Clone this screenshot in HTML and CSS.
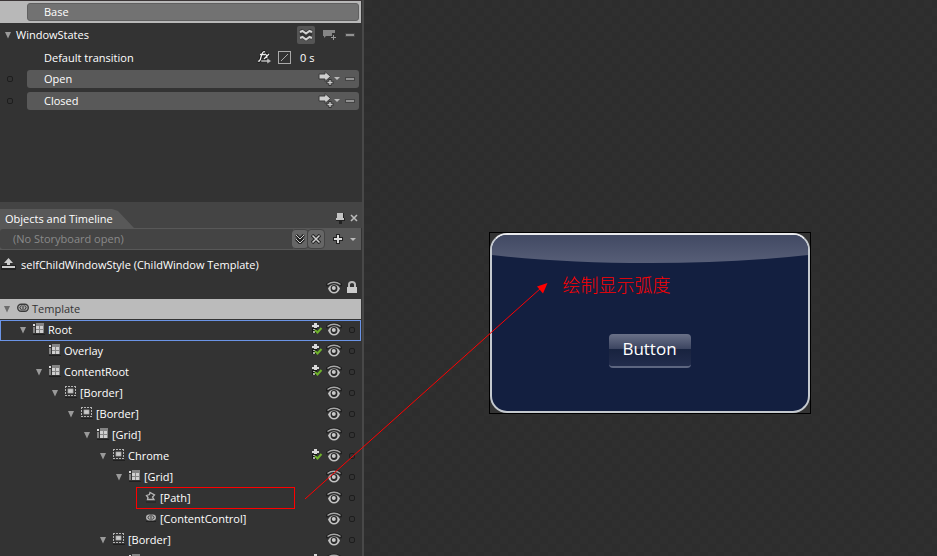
FILE: index.html
```html
<!DOCTYPE html>
<html lang="en">
<head>
<meta charset="utf-8">
<title>Objects and Timeline</title>
<link rel="stylesheet" href="styles.css">
</head>
<body>
<svg class="defs" aria-hidden="true">
  <defs>
    <symbol id="eye" viewBox="0 0 16 16">
      <path d="M0 5.500Q8-1.500 16 5.500" fill="none" stroke="#1f1f1f" stroke-width="3"/>
      <path d="M1.500 4.500Q8 0 14.500 4.500" fill="none" stroke="#a9a9a9" stroke-width="1.400"/>
      <path d="M2 8.500Q4 4.500 8 4.500Q12 4.500 14 8.500Q12 13.500 8 13.500Q4 13.500 2 8.500Z" fill="#c4c4c4"/>
      <circle cx="8" cy="8.500" r="3.400" fill="#2a2a2a"/><circle cx="7.800" cy="8" r="2" fill="#c8c8c8"/>
    </symbol>
    <symbol id="dot" viewBox="0 0 8 8"><rect x="1.500" y="1.500" width="5" height="5" rx="1.500" fill="none" stroke="#1d1d1d"/></symbol>
    <symbol id="caret" viewBox="0 0 8 8"><path d="M1 1H7L4 7.500Z" fill="#9a9a9a"/></symbol>
    <symbol id="grid" viewBox="0 0 12 12">
      <path d="M0 11.500H12" stroke="#202020"/>
      <path d="M0 4H2V10H0ZM3 0H11V2H3Z" fill="#858585"/><path d="M0 1H2V3H0Z" fill="#ddd"/>
      <path d="M3 2H11V10H3Z" fill="#858585"/>
      <path d="M3 3H6V6H3ZM7 3H10V6H7ZM3 7H6V10H3ZM7 7H10V10H7Z" fill="#d0d0d0"/>
    </symbol>
    <symbol id="border" viewBox="0 0 12 12">
      <path d="M0 11.500H12" stroke="#202020"/>
      <path d="M0 .5H11M0 9.500H11" stroke="#b4b4b4" stroke-dasharray="2 1"/>
      <path d="M.5 0V10M10.500 0V10" stroke="#b4b4b4" stroke-dasharray="2 1"/>
      <rect x="2" y="2" width="7" height="6" fill="#2b2b2b"/>
      <rect x="3" y="3" width="5" height="4" fill="#c8c8c8" stroke="#aaa" stroke-width=".8"/>
    </symbol>
    <symbol id="template" viewBox="0 0 12 10">
      <rect x=".7" y="1.200" width="10.600" height="7" rx="3.500" fill="#aaa" stroke="#3b3b3b" stroke-width="1.400"/>
      <path d="M4.500 2.500L2.800 4.700L4.500 7M7.500 2.500L9.200 4.700L7.500 7M6 2.500V7" fill="none" stroke="#333"/>
    </symbol>
    <symbol id="control" viewBox="0 0 12 10">
      <rect x="1" y="1.500" width="10" height="6" rx="3" fill="#b0b0b0"/>
      <path d="M4.500 2.500L3 4.500L4.500 6.500M7.500 2.500L9 4.500L7.500 6.500M6 1.500V7.500" fill="none" stroke="#363636"/>
      <path d="M1 8.500H11" stroke="#202020"/>
    </symbol>
    <symbol id="path" viewBox="0 0 12 12">
      <path d="M2.500 8.500L3 6.500L1.500 4.500L4.500 3.500L5 1.500L9.500 4L7.500 6L9 8.500Z" fill="none" stroke="#b5b5b5" stroke-width="1.300"/>
      <path d="M1 11H11" stroke="#202020"/>
    </symbol>
    <symbol id="part" viewBox="0 0 12 12">
      <path d="M1 5H6V10H1Z" fill="#171717"/>
      <path d="M3 0H6V2H8V4H6V5H3V4H1V2H3Z" fill="#d8d8d8"/>
      <path d="M2 6H4V7H2ZM2 8H4V10H2Z" fill="#aaa"/>
      <path d="M4 7L6.500 9.500L10.500 5" fill="none" stroke="#6eb12b" stroke-width="2"/>
    </symbol>
    <symbol id="minus" viewBox="0 0 10 6"><rect x="0" y="1" width="10" height="4" fill="#444"/><rect x="1" y="2" width="8" height="2" fill="#929292"/></symbol>
    <symbol id="addtransition" viewBox="0 0 24 16">
      <path d="M1 3H7V.5L12.500 5.500L7 10.500V8H1Z" fill="#ccc" stroke="#3a3a3a"/>
      <path d="M12 8V15M8.500 11.500H15.500" stroke="#333" stroke-width="3"/><path d="M12 9V14M9.500 11.500H14.500" stroke="#ccc" stroke-width="1.300"/>
      <path d="M16 6H22L19 9Z" fill="#bbb"/>
    </symbol>
  </defs>
</svg>
<div class="app">
  <aside class="panel">
    <section class="states" aria-label="States">
      <div class="base"><div class="bar">Base</div></div>
      <div class="group">
        <svg class="caret"><use href="#caret"/></svg><span class="grow">WindowStates</span>
        <button class="fluid" aria-label="Fluid layout"><svg width="18" height="18" viewBox="0 0 18 18"><path d="M3 5.500L5 4.500L9 7L13 4.500L15 5.500M3 12.500L5 11L9 13.500L13 11L15 12.500M3 9L5 8L9 10.500L13 8L15 9" fill="none" stroke="#333" stroke-width="3"/><path d="M3 6L5.500 5L9 7.500L12.500 5L15 6M3 12L5.500 11L9 13.500L12.500 11L15 12" fill="none" stroke="#d0d0d0" stroke-width="2"/></svg></button>
        <button class="addstate" aria-label="Add state"><svg width="16" height="14" viewBox="0 0 16 14"><path d="M1 2H13V8H4L2 10V8H1Z" fill="#858585"/><path d="M11.500 5V13M8 9.500H15" stroke="#333" stroke-width="3"/><path d="M11.500 7V12M9 9.500H14" stroke="#999"/></svg></button>
        <button aria-label="Remove group"><svg class="minus"><use href="#minus"/></svg></button>
      </div>
      <div class="transition">
        <span class="grow">Default transition</span>
        <button aria-label="Effect"><svg width="15" height="15" viewBox="0 0 15 15"><path d="M1 11Q3 12 4 7L5 4Q6 1 8 2M3 4.500H7M7 5Q9 3 9.500 6L10 8M12 4L7 9" fill="none" stroke="#111" stroke-width="3"/><path d="M1 11Q3 12 4 7L5 4Q6 1 8 2M3 4.500H7M7 5Q9 3 9.500 6L10 8M12 4L7 9" fill="none" stroke="#eee" stroke-width="1.300"/><path d="M4 10H10V8L14.500 11L10 14V12H4Z" fill="#bbb" stroke="#222" stroke-width=".5"/></svg></button>
        <button class="ease" aria-label="Easing"><svg width="14" height="14" viewBox="0 0 14 14"><rect x=".5" y=".5" width="12" height="12" fill="none" stroke="#aaa"/><path d="M3 10L10 3" stroke="#aaa"/></svg></button>
        <span class="secs">0 s</span>
      </div>
      <div class="state"><svg class="dot"><use href="#dot"/></svg><div class="bar"><span class="grow">Open</span><button aria-label="Add transition"><svg class="addt"><use href="#addtransition"/></svg></button><button aria-label="Remove"><svg class="minus"><use href="#minus"/></svg></button></div></div>
      <div class="state"><svg class="dot"><use href="#dot"/></svg><div class="bar"><span class="grow">Closed</span><button aria-label="Add transition"><svg class="addt"><use href="#addtransition"/></svg></button><button aria-label="Remove"><svg class="minus"><use href="#minus"/></svg></button></div></div>
    </section>

    <header class="tabs">
      <h2 class="tab">Objects and Timeline</h2>
      <button aria-label="Pin"><svg width="12" height="12" viewBox="0 0 12 12"><path d="M3 1H10V6H11V9H8V12H5V9H2V6H3Z" fill="#222"/><path d="M3 1H9V6H10V8H2V6H3Z" fill="#c4c4c4"/></svg></button>
      <button aria-label="Close"><svg width="10" height="10" viewBox="0 0 10 10"><path d="M2 2L8 8M8 2L2 8" stroke="#bbb" stroke-width="1.600"/></svg></button>
    </header>
    <div class="story">
      <span class="name">(No Storyboard open)</span>
      <button class="sq" aria-label="Open storyboard"><svg width="10" height="10" viewBox="0 0 10 10"><path d="M1 1L5 5L9 1M1 5L5 9L9 5" fill="none" stroke="#222" stroke-width="3"/><path d="M1 1L5 5L9 1M1 5L5 9L9 5" fill="none" stroke="#ccc"/></svg></button>
      <button class="sq" aria-label="Close storyboard"><svg width="10" height="10" viewBox="0 0 10 10"><path d="M1 1L9 9M9 1L1 9" stroke="#222" stroke-width="3.500"/><path d="M1.500 1.500L8.500 8.500M8.500 1.500L1.500 8.500" stroke="#ccc" stroke-width="1.500"/></svg></button>
      <button class="plus" aria-label="New storyboard"><svg width="12" height="12" viewBox="0 0 12 12"><path d="M6 1V11M1 6H11" stroke="#222" stroke-width="4"/><path d="M6 2V10M2 6H10" stroke="#ddd" stroke-width="2"/></svg></button>
      <button aria-label="Storyboard menu"><svg width="8" height="8" viewBox="0 0 8 8"><path d="M1 3H7L4 6Z" fill="#bbb"/></svg></button>
    </div>
    <div class="scope">
      <svg width="16" height="14" viewBox="0 0 16 14"><path d="M1 7H16V12H1Z" fill="#222"/><path d="M2 8H15V10H2ZM8.500 0L13 5H10V7H7V5H4Z" fill="#ccc"/></svg>
      <span>selfChildWindowStyle (ChildWindow Template)</span>
    </div>
    <div class="columns">
      <svg class="eye"><use href="#eye"/></svg>
      <svg width="12" height="12" viewBox="0 0 12 12"><path d="M3 6V3.500Q3 1 6 1Q9 1 9 3.500V6" fill="none" stroke="#bbb" stroke-width="2"/><path d="M1 6H11V12H1Z" fill="#ccc"/></svg>
    </div>

    <ul class="tree">
      <li class="row d0 head"><svg class="caret"><use href="#caret"/></svg><svg class="ico"><use href="#template"/></svg><span class="grow">Template</span></li>
      <li class="row d1 selected"><svg class="caret"><use href="#caret"/></svg><svg class="ico"><use href="#grid"/></svg><span class="grow">Root</span><svg class="part"><use href="#part"/></svg><svg class="eye"><use href="#eye"/></svg><svg class="dot"><use href="#dot"/></svg></li>
      <li class="row d2"><span class="caret"></span><svg class="ico"><use href="#grid"/></svg><span class="grow">Overlay</span><svg class="part"><use href="#part"/></svg><svg class="eye"><use href="#eye"/></svg><svg class="dot"><use href="#dot"/></svg></li>
      <li class="row d2"><svg class="caret"><use href="#caret"/></svg><svg class="ico"><use href="#grid"/></svg><span class="grow">ContentRoot</span><svg class="part"><use href="#part"/></svg><svg class="eye"><use href="#eye"/></svg><svg class="dot"><use href="#dot"/></svg></li>
      <li class="row d3"><svg class="caret"><use href="#caret"/></svg><svg class="ico"><use href="#border"/></svg><span class="grow">[Border]</span><svg class="eye"><use href="#eye"/></svg><svg class="dot"><use href="#dot"/></svg></li>
      <li class="row d4"><svg class="caret"><use href="#caret"/></svg><svg class="ico"><use href="#border"/></svg><span class="grow">[Border]</span><svg class="eye"><use href="#eye"/></svg><svg class="dot"><use href="#dot"/></svg></li>
      <li class="row d5"><svg class="caret"><use href="#caret"/></svg><svg class="ico"><use href="#grid"/></svg><span class="grow">[Grid]</span><svg class="eye"><use href="#eye"/></svg><svg class="dot"><use href="#dot"/></svg></li>
      <li class="row d6"><svg class="caret"><use href="#caret"/></svg><svg class="ico"><use href="#border"/></svg><span class="grow">Chrome</span><svg class="part"><use href="#part"/></svg><svg class="eye"><use href="#eye"/></svg><svg class="dot"><use href="#dot"/></svg></li>
      <li class="row d7"><svg class="caret"><use href="#caret"/></svg><svg class="ico"><use href="#grid"/></svg><span class="grow">[Grid]</span><svg class="eye"><use href="#eye"/></svg><svg class="dot"><use href="#dot"/></svg></li>
      <li class="row d8"><span class="caret"></span><svg class="ico"><use href="#path"/></svg><span class="grow">[Path]</span><svg class="eye"><use href="#eye"/></svg><svg class="dot"><use href="#dot"/></svg></li>
      <li class="row d8"><span class="caret"></span><svg class="ico"><use href="#control"/></svg><span class="grow">[ContentControl]</span><svg class="eye"><use href="#eye"/></svg><svg class="dot"><use href="#dot"/></svg></li>
      <li class="row d6"><svg class="caret"><use href="#caret"/></svg><svg class="ico"><use href="#border"/></svg><span class="grow">[Border]</span><svg class="eye"><use href="#eye"/></svg><svg class="dot"><use href="#dot"/></svg></li>
      <li class="row d7"><svg class="caret"><use href="#caret"/></svg><svg class="ico"><use href="#grid"/></svg><span class="grow"></span><svg class="part"><use href="#part"/></svg><svg class="eye"><use href="#eye"/></svg><svg class="dot"><use href="#dot"/></svg></li>
    </ul>
  </aside>

  <main class="canvas">
    <div class="frame">
      <div class="window">
        <svg class="gloss" viewBox="0 0 316 28" preserveAspectRatio="none" aria-hidden="true">
          <defs><linearGradient id="g" x1="0" y1="0" x2="0" y2="1"><stop offset="0" stop-color="#414963"/><stop offset="1" stop-color="#575e77"/></linearGradient></defs>
          <path d="M0 0H316V20Q245 28 158 28Q71 28 0 20Z" fill="url(#g)"/>
        </svg>
        <p class="note" lang="zh-CN">绘制显示弧度</p>
        <button class="demo">Button</button>
      </div>
    </div>
  </main>
</div>
<svg class="annotation" width="937" height="556" viewBox="0 0 937 556" aria-hidden="true">
  <rect x="136.500" y="487.500" width="158" height="21" fill="none" stroke="#f00"/>
  <path d="M305 499L541 288" stroke="#f00" fill="none"/>
  <path d="M547.500 283L543 293.500L537 286.500Z" fill="#f00"/>
</svg>
</body>
</html>
```

FILE: styles.css
```css
* { box-sizing: border-box; }
body {
  margin: 0;
  background: #333;
  color: #fff;
  font: 500 11px/16px "Open Sans", "Noto Sans", sans-serif;
}
svg { display: block; flex: none; }
button {
  display: flex;
  align-items: center;
  justify-content: center;
  padding: 0;
  border: 0;
  background: none;
  color: inherit;
  font: inherit;
}
.defs { position: absolute; width: 0; height: 0; }
.app { display: flex; height: 100vh; overflow: hidden; }
.grow { flex: 1; }
.caret { width: 8px; height: 8px; }
.dot { width: 8px; height: 8px; }
.eye { width: 16px; height: 16px; }
.minus { width: 10px; height: 6px; }
.addt { width: 24px; height: 16px; }
.part { width: 12px; height: 12px; }
.ico { width: 12px; height: 12px; }

.panel {
  flex: none;
  width: 364px;
  border-right: 2px solid #484848;
  background: #333;
}
.states { height: 202px; border-top: 1px solid #3c3637; }
.bar {
  display: flex;
  align-items: center;
  flex: 1;
  height: 18px;
  padding: 0 4px 0 17px;
  border-radius: 3px;
  background: #595959;
}
.bar .addt { margin-right: 3px; }
.base { display: flex; height: 22px; padding: 2px 2px 2px 27px; margin-right: 1px; background: #b8b8b8; }
.base .bar { background: #727272; border: 1px solid #606060; padding-left: 16px; }
.group { display: flex; align-items: center; height: 24px; padding: 0 7px 0 4px; gap: 4px; }
.fluid { width: 18px; height: 18px; background: #555; border-radius: 2px; }
.addstate { margin: 0 3px; }
.transition { display: flex; align-items: center; height: 21px; padding: 0 44px 0 44px; }
.ease { margin: 0 8px 0 6px; }
.secs { width: 18px; }
.state { display: flex; align-items: center; gap: 13px; height: 22px; padding: 0 3px 0 6px; }

.tabs {
  display: flex;
  align-items: flex-end;
  gap: 3px;
  height: 26px;
  padding-right: 3px;
  background: #444;
}
.tabs button { height: 20px; }
.tab {
  margin: 0 auto 0 0;
  width: 134px;
  padding: 2px 0 1px 5px;
  background: #585858;
  clip-path: polygon(0 0, 112px 0, 118px 2px, 134px 100%, 0 100%);
  font: inherit;
}
.story {
  display: flex;
  align-items: center;
  height: 22px;
  padding-right: 4px;
  background: #585858;
  margin-right: 1px;
}
.story .name {
  flex: 1;
  height: 20px;
  padding: 2px 0 0 13px;
  margin-right: -1px;
  border-radius: 3px 0 0 3px;
  background: #444;
  color: #8a8a8a;
}
.sq { width: 16px; height: 18px; background: #666; border-radius: 3px; outline: 1px solid #444; }
.plus { margin: 0 5px 0 8px; }
.scope { display: flex; align-items: center; gap: 5px; height: 30px; }
.columns { display: flex; align-items: flex-start; justify-content: flex-end; gap: 4px; height: 19px; padding-right: 4px; }
.columns svg:last-child { margin-top: 1px; }

.tree { margin: 0; padding: 0; list-style: none; }
.row { display: flex; align-items: center; height: 21px; padding: 0 5px 2px 0; margin-right: 1px; }
.row .ico { margin: 0 3px 2px 6px; }
.row .part { margin: 0 3px 2px 0; }
.row .eye { margin-right: 6px; }
.head { height: 20px; margin-bottom: 1px; padding-bottom: 0; background: #bbb; color: #333; }
.head .caret { filter: brightness(.7); }
.selected { outline: 1px solid #6b94e6; outline-offset: -1px; }
.d0 { padding-left: 3px; }
.d1 { padding-left: 19px; }
.d2 { padding-left: 35px; }
.d3 { padding-left: 51px; }
.d4 { padding-left: 67px; }
.d5 { padding-left: 83px; }
.d6 { padding-left: 99px; }
.d7 { padding-left: 115px; }
.d8 { padding-left: 131px; }

.canvas {
  flex: 1;
  display: flex;
  justify-content: center;
  align-items: flex-start;
  padding: 232px 2px 0 0;
  background: repeating-conic-gradient(#2d2d2d 0 25%, #2f2f2f 0 50%) 0 0 / 16px 16px;
}
.frame { width: 322px; border: 1px solid #000; background: #333; }
.window {
  display: flex;
  flex-direction: column;
  align-items: center;
  height: 180px;
  overflow: hidden;
  border: 2px solid #c4c9cf;
  border-top-color: #e8e9ec;
  border-radius: 17px;
  background: #131f40;
}
.gloss { width: 100%; height: 28px; }
.note {
  margin: 9px 0 0;
  padding-right: 66px;
  color: #f00;
  font: 300 18px/24px "Noto Sans CJK SC", sans-serif;
}
.demo {
  width: 82px;
  height: 34px;
  margin-top: 38px;
  padding-bottom: 2px;
  border-radius: 4px;
  border-bottom: 2px solid #5d6680;
  background: linear-gradient(#6a7188, #3a435f 48%, #18233f 48%, #222c4c);
  color: #fff;
  font: 500 17px/28px "Open Sans", "Noto Sans", sans-serif;
}
.annotation { position: absolute; left: 0; top: 0; pointer-events: none; }
```
